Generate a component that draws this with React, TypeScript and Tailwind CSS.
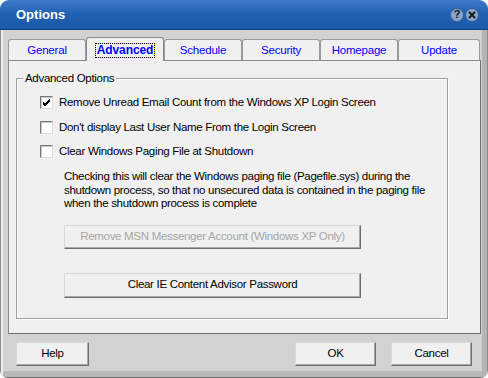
import React from 'react'

const tabs = ['General', 'Advanced', 'Schedule', 'Security', 'Homepage', 'Update']

function Tab({ label, active, width }: { label: string; active?: boolean; width: number }) {
  if (active) {
    return (
      <div
        className="relative z-10 -mb-px flex h-[24px] items-center justify-center rounded-t-[3px] border border-b-0 border-[#8a8a8a] bg-[#f0f0f0] text-[#0000ff]"
        style={{ width }}
      >
        <span className="mt-[1px] border border-dotted border-black bg-[#ffee00]">
          <span className="block bg-[#f0f0f0] px-[1px] text-[12px] leading-[13px] font-bold tracking-[-0.1px]">{label}</span>
        </span>
      </div>
    )
  }
  return (
    <div
      className="flex h-[21px] items-center justify-center rounded-t-[3px] border border-b-0 border-[#9a9a9a] bg-[#f0f0f0] pt-[1px] text-[11.5px] tracking-[-0.2px] text-[#0000ff]"
      style={{ width }}
    >
      {label}
    </div>
  )
}

function Checkbox({ checked, label }: { checked?: boolean; label: string }) {
  return (
    <div className="flex h-[13px] items-center">
      <div className="flex h-[13px] w-[13px] items-center justify-center border border-t-[#7a7a7a] border-l-[#7a7a7a] border-r-[#dcdcdc] border-b-[#dcdcdc] bg-white shadow-[inset_1px_1px_#c8c8c8]">
        {checked && (
          <svg width="9" height="9" viewBox="0 0 9 9">
            <path d="M1 4 L3 6 L8 1 M1 5 L3 7 L8 2 M1 6 L3 8 L8 3" stroke="#000" strokeWidth="1" fill="none" />
          </svg>
        )}
      </div>
      <span className="ml-[6px]">{label}</span>
    </div>
  )
}

function Button({ children, disabled, className }: { children: React.ReactNode; disabled?: boolean; className?: string }) {
  return (
    <div
      className={`flex items-center justify-center border border-t-[#d8d8d8] border-l-[#d8d8d8] border-r-[#6e6e6e] border-b-[#6e6e6e] bg-[#f0f0f0] shadow-[inset_-1px_-1px_#a8a8a8] ${
        disabled ? 'text-[#a6a6a6]' : 'text-black'
      } ${className || ''}`}
    >
      {children}
    </div>
  )
}

export default function App() {
  return (
    <div className="h-[378px] w-[488px] bg-white font-['Liberation_Sans',Arial,sans-serif] text-[11.5px] tracking-[-0.3px] text-black">
      <div className="flex h-full flex-col overflow-hidden rounded-t-[9px] rounded-b-[8px] bg-[#d2d2d2]">
        {/* Title bar */}
        <div className="flex h-[30px] items-center border-b border-[#0f3f80] bg-gradient-to-b from-[#3d7bc9] via-[#1f60b1] to-[#1a5aa9] pl-[16px] pr-[9px]">
          <span className="text-[13px] font-bold tracking-normal text-white">Options</span>
          <div className="ml-auto flex gap-[1px]">
            <div className="flex h-[14px] w-[14px] items-center justify-center rounded-full border border-[#3c5f90] bg-[#8aa4c8] text-[11px] leading-none font-bold text-[#101820]">
              ?
            </div>
            <div className="flex h-[14px] w-[14px] items-center justify-center rounded-full border border-[#3c5f90] bg-[#8aa4c8]">
              <svg width="8" height="8" viewBox="0 0 8 8">
                <path d="M1 1 L7 7 M7 1 L1 7" stroke="#101820" strokeWidth="1.8" />
              </svg>
            </div>
          </div>
        </div>

        {/* Body */}
        <div className="flex flex-1 flex-col border-x border-b border-x-[#8a8a8a] border-b-[#6a6a6a] px-[7px] shadow-[inset_2px_0_#ececec,inset_-5px_0_#b4b4b4,inset_0_-6px_#b8b8b8]">
          <div className="mt-[7px] flex items-end">
            {tabs.map((t, i) => (
              <Tab key={t} label={t} active={t === 'Advanced'} width={i === 5 ? 82 : 78} />
            ))}
          </div>

          {/* Tab panel */}
          <div className="flex h-[274px] w-[473px] flex-col border border-t-[#8a8a8a] border-l-[#8a8a8a] border-r-[#6e6e6e] border-b-[#6e6e6e] bg-[#f0f0f0] px-[7px] pt-[17px]">
            <div className="relative h-[241px] w-[432px] border border-[#a0a0a0] shadow-[inset_1px_1px_#fff,1px_1px_#fff]">
              <span className="absolute -top-[8px] left-[6px] bg-[#f0f0f0] px-[2px] leading-[14px]">Advanced Options</span>
              <div className="flex flex-col gap-[11px] pt-[17px] pl-[23px]">
                <Checkbox checked label="Remove Unread Email Count from the Windows XP Login Screen" />
                <div className="mt-[1px]">
                  <Checkbox label="Don't display Last User Name From the Login Screen" />
                </div>
                <Checkbox label="Clear Windows Paging File at Shutdown" />
              </div>
              <p className="mt-[12px] ml-[47px] leading-[13.5px] whitespace-nowrap">
                Checking this will clear the Windows paging file (Pagefile.sys) during the
                <br />
                shutdown process, so that no unsecured data is contained in the paging file
                <br />
                when the shutdown process is complete
              </p>
              <Button disabled className="mt-[14px] ml-[47px] h-[24px] w-[297px]">
                Remove MSN Messenger Account (Windows XP Only)
              </Button>
              <Button className="mt-[24px] ml-[47px] h-[25px] w-[297px]">Clear IE Content Advisor Password</Button>
            </div>
          </div>

          {/* Bottom buttons */}
          <div className="mt-[8px] flex px-[8px]">
            <Button className="h-[24px] w-[73px]">Help</Button>
            <Button className="ml-auto h-[24px] w-[81px]">OK</Button>
            <Button className="ml-[15px] h-[24px] w-[81px]">Cancel</Button>
          </div>
        </div>
      </div>
    </div>
  )
}
